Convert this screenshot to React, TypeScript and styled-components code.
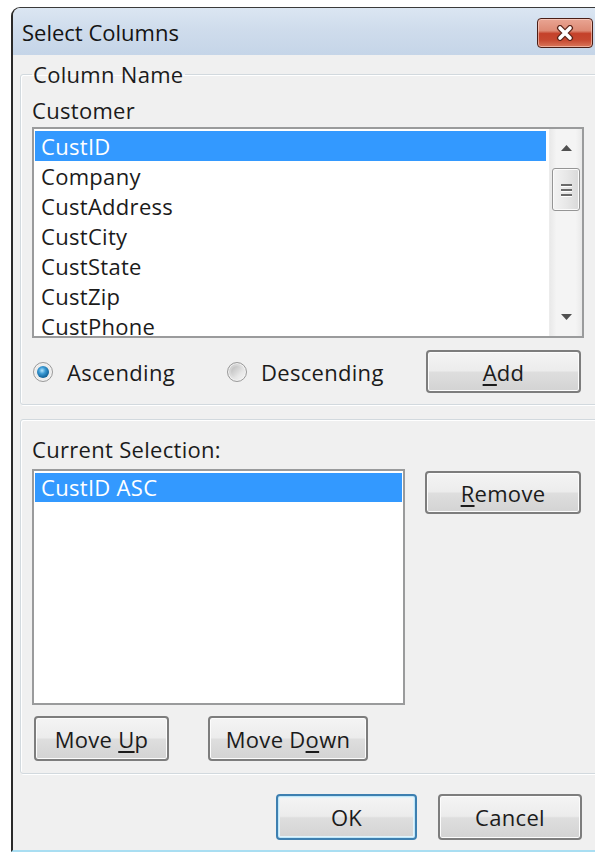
import React from "react";
import styled, { createGlobalStyle, css } from "styled-components";

const GlobalStyle = createGlobalStyle`
  html, body {
    margin: 0;
    padding: 0;
    background: #ffffff;
    overflow: hidden;
  }
`;

const Screen = styled.div`
  box-sizing: border-box;
  width: 595px;
  height: 854px;
  padding: 7px 0 0 11px;
  overflow: hidden;
  font-family: "Open Sans", "Noto Sans", sans-serif;
  font-size: 22px;
  letter-spacing: 0.3px;
  color: #1b1b1b;
`;

const Window = styled.div`
  box-sizing: border-box;
  width: 600px;
  display: flex;
  flex-direction: column;
  background: #f0f0f0;
  border-top: 1px solid #3a3a3a;
  border-left: 2px solid #2a2a2a;
  border-bottom: 2px solid #a9def2;
  border-top-left-radius: 9px;
  padding-bottom: 10px;
`;

const TitleBar = styled.div`
  height: 47px;
  display: flex;
  align-items: center;
  padding-left: 9px;
  background: linear-gradient(#dbe6f2 0%, #cfdcec 45%, #c5d5e8 100%);
  border-top-left-radius: 8px;
`;

const Title = styled.span`
  font-size: 22px;
  color: #141414;
  letter-spacing: 0;
`;

const CloseButton = styled.button`
  margin-left: auto;
  margin-right: 18px;
  margin-top: 2px;
  width: 56px;
  height: 30px;
  padding: 0;
  display: flex;
  align-items: center;
  justify-content: center;
  border: 1px solid #4a1e16;
  border-radius: 4px;
  background: linear-gradient(
    #e9a593 0%,
    #dd8a75 42%,
    #c4412a 52%,
    #c64830 75%,
    #d9775b 100%
  );
  box-shadow: inset 0 0 0 1px rgba(255, 220, 210, 0.55);
`;

const Body = styled.div`
  display: flex;
  flex-direction: column;
`;

const Group = styled.fieldset<{ $top: number }>`
  margin: ${(p) => p.$top}px 6px 0 7px;
  padding: 0 0 11px 11px;
  border: 1px solid #d2d9de;
  border-radius: 3px;
  box-shadow: inset 1px 1px 0 #ffffff, 1px 1px 0 #ffffff;
  min-width: 0;
`;

const GroupTwo = styled(Group)`
  padding-top: 16px;
  padding-bottom: 12px;
`;

const Legend = styled.legend`
  padding: 0 1px;
  line-height: 26px;
  font-size: 22px;
  color: #1b1b1b;
`;

const Label = styled.div<{ $gap: number }>`
  margin-top: ${(p) => p.$gap}px;
  line-height: 26px;
  height: 26px;
`;

const ListBox = styled.div<{ $w: number; $h: number; $gap: number }>`
  box-sizing: border-box;
  width: ${(p) => p.$w}px;
  height: ${(p) => p.$h}px;
  margin-top: ${(p) => p.$gap}px;
  border: 2px solid #9a9b9c;
  background: #ffffff;
  display: flex;
  overflow: hidden;
`;

const Items = styled.div<{ $pr: number }>`
  flex: 1;
  padding: 2px ${(p) => p.$pr}px 0 1px;
  min-width: 0;
`;

const Item = styled.div<{ $selected?: boolean; $h?: number }>`
  height: ${(p) => p.$h ?? 30}px;
  line-height: ${(p) => p.$h ?? 30}px;
  padding-left: 6px;
  white-space: nowrap;
  ${(p) =>
    p.$selected &&
    css`
      background: #3399ff;
      color: #ffffff;
    `}
`;

const ScrollBar = styled.div`
  width: 32px;
  display: flex;
  flex-direction: column;
  background: linear-gradient(90deg, #e9e9e9 0%, #f4f4f4 20%, #f4f4f4 80%, #e9e9e9 100%);
  border-left: 1px solid #ececec;
`;

const ArrowZone = styled.div`
  height: 38px;
  display: flex;
  align-items: center;
  justify-content: center;
`;

const Track = styled.div`
  flex: 1;
  padding: 1px 2px 0;
`;

const Thumb = styled.div`
  box-sizing: border-box;
  height: 43px;
  border: 1px solid #959595;
  border-radius: 3px;
  background: linear-gradient(90deg, #f3f3f3 0%, #e8e8e8 50%, #d9d9d9 100%);
  box-shadow: inset 0 0 0 1px #fbfbfb;
  display: flex;
  flex-direction: column;
  align-items: center;
  justify-content: center;
  gap: 3px;
`;

const Grip = styled.span`
  width: 11px;
  height: 2px;
  background: #6a6a6a;
  box-shadow: 0 1px 0 #ffffff;
`;

const RadioRow = styled.div`
  margin-top: 12px;
  width: 552px;
  height: 43px;
  display: flex;
  align-items: center;
`;

const RadioOption = styled.label<{ $w?: number }>`
  display: flex;
  align-items: center;
  gap: 14px;
  margin-left: 1px;
  ${(p) => p.$w && css`width: ${p.$w}px;`}
`;

const RadioDot = styled.span<{ $checked?: boolean }>`
  position: relative;
  box-sizing: border-box;
  width: 20px;
  height: 20px;
  border-radius: 50%;
  border: 1px solid #9a9a9a;
  background: ${(p) =>
    p.$checked
      ? "radial-gradient(circle at 50% 50%, #ffffff 0%, #dcdcdc 100%)"
      : "linear-gradient(135deg, #c4c4c4 0%, #e2e2e2 55%, #f7f7f7 100%)"};
  box-shadow: inset 0 0 0 1px #f4f4f4;
  &::after {
    content: "";
    position: absolute;
    left: 3px;
    top: 3px;
    width: 12px;
    height: 12px;
    border-radius: 50%;
    ${(p) =>
      p.$checked
        ? css`
            background: radial-gradient(
              circle at 42% 38%,
              #b3e6ff 0%,
              #3b9ad4 32%,
              #12639a 70%,
              #0a3f66 100%
            );
          `
        : css`
            background: linear-gradient(135deg, #bababa 0%, #e6e6e6 70%, #f3f3f3 100%);
          `}
  }
`;

const Button = styled.button<{ $w: number; $h: number; $default?: boolean }>`
  box-sizing: border-box;
  width: ${(p) => p.$w}px;
  height: ${(p) => p.$h}px;
  padding: 0;
  font-family: inherit;
  font-size: 22px;
  letter-spacing: 0.3px;
  color: #1b1b1b;
  border: 2px solid #7d7d7d;
  border-radius: 4px;
  background: linear-gradient(#f4f4f4 0%, #ececec 48%, #dedede 52%, #d3d3d3 100%);
  box-shadow: inset 0 0 0 1px #fcfcfc;
  ${(p) =>
    p.$default &&
    css`
      border-color: #3d7fb0;
      box-shadow: inset 0 0 0 1px #bfe6f8, inset 0 0 0 2px #e2f3fb;
    `}
`;

const AddButton = styled(Button)`
  margin-left: auto;
  margin-right: 3px;
`;

const Key = styled.span`
  text-decoration: underline;
  text-decoration-thickness: 1.5px;
  text-underline-offset: 3px;
`;

const SelectionRow = styled.div`
  display: flex;
  align-items: flex-start;
`;

const RemoveButton = styled(Button)`
  margin: 9px 0 0 20px;
`;

const MoveRow = styled.div`
  margin-top: 11px;
  padding-left: 2px;
  display: flex;
  gap: 39px;
`;

const Footer = styled.div`
  margin-top: 20px;
  padding-right: 29px;
  display: flex;
  justify-content: flex-end;
  gap: 21px;
`;

const CloseGlyph = () => (
  <svg width="22" height="16" viewBox="0 0 22 16">
    <path d="M6 3 L16 13 M16 3 L6 13" stroke="#5a2419" strokeWidth="6" strokeLinecap="round" fill="none" />
    <path d="M6 3 L16 13 M16 3 L6 13" stroke="#ffffff" strokeWidth="3.6" strokeLinecap="round" fill="none" />
  </svg>
);

const Arrow = ({ down }: { down?: boolean }) => (
  <svg width="11" height="7" viewBox="0 0 11 7">
    <polygon points={down ? "0,0 11,0 5.5,6" : "0,6 11,6 5.5,0"} fill="#505050" />
  </svg>
);

const columns = [
  "CustID",
  "Company",
  "CustAddress",
  "CustCity",
  "CustState",
  "CustZip",
  "CustPhone",
];

export default function App() {
  return (
    <>
      <GlobalStyle />
      <Screen>
        <Window>
          <TitleBar>
            <Title>Select Columns</Title>
            <CloseButton aria-label="Close">
              <CloseGlyph />
            </CloseButton>
          </TitleBar>
          <Body>
            <Group $top={6}>
              <Legend>Column Name</Legend>
              <Label $gap={10}>Customer</Label>
              <ListBox $w={552} $h={211} $gap={4}>
                <Items $pr={3}>
                  {columns.map((c, i) => (
                    <Item key={c} $selected={i === 0}>
                      {c}
                    </Item>
                  ))}
                </Items>
                <ScrollBar>
                  <ArrowZone>
                    <Arrow />
                  </ArrowZone>
                  <Track>
                    <Thumb>
                      <Grip />
                      <Grip />
                      <Grip />
                    </Thumb>
                  </Track>
                  <ArrowZone>
                    <Arrow down />
                  </ArrowZone>
                </ScrollBar>
              </ListBox>
              <RadioRow>
                <RadioOption $w={193}>
                  <RadioDot $checked />
                  Ascending
                </RadioOption>
                <RadioOption>
                  <RadioDot />
                  Descending
                </RadioOption>
                <AddButton $w={155} $h={43}>
                  <Key>A</Key>dd
                </AddButton>
              </RadioRow>
            </Group>
            <GroupTwo $top={14}>
              <Label $gap={0}>Current Selection:</Label>
              <SelectionRow>
                <ListBox $w={373} $h={236} $gap={7}>
                  <Items $pr={1}>
                    <Item $selected $h={29}>
                      CustID ASC
                    </Item>
                  </Items>
                </ListBox>
                <RemoveButton $w={156} $h={43}>
                  <Key>R</Key>emove
                </RemoveButton>
              </SelectionRow>
              <MoveRow>
                <Button $w={135} $h={45}>
                  Move <Key>U</Key>p
                </Button>
                <Button $w={160} $h={45}>
                  Move D<Key>o</Key>wn
                </Button>
              </MoveRow>
            </GroupTwo>
            <Footer>
              <Button $w={141} $h={46} $default>
                OK
              </Button>
              <Button $w={144} $h={46}>
                Cancel
              </Button>
            </Footer>
          </Body>
        </Window>
      </Screen>
    </>
  );
}
